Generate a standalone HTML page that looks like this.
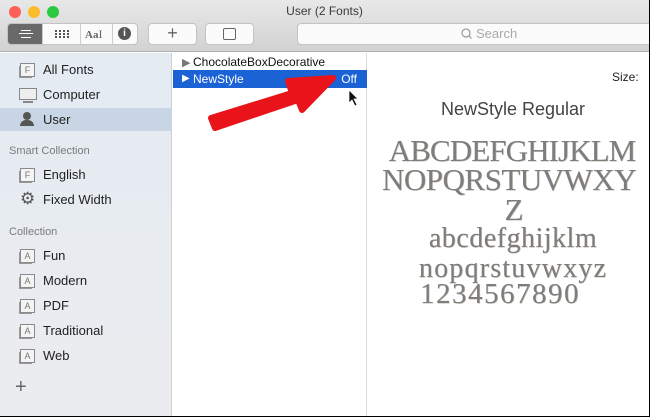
<!DOCTYPE html>
<html><head><style>
*{margin:0;padding:0;box-sizing:border-box}
body{width:650px;height:417px;overflow:hidden;background:#000;font-family:"Liberation Sans",sans-serif;position:relative}
.win{position:absolute;left:0;top:0;width:649px;height:416px;background:#fff;overflow:hidden}
.top{position:absolute;left:0;top:0;width:100%;height:52px;background:linear-gradient(#e9e8e9,#d3d2d3);border-bottom:1px solid #b1b0b1}
.dot{position:absolute;top:6px;width:12px;height:12px;border-radius:50%}
.title{position:absolute;top:4px;left:0;width:100%;text-align:center;font-size:12px;color:#3a3a3a}
.btn{position:absolute;top:23px;height:22px;background:#fbfbfb;border:1px solid #c4c3c4;border-radius:4px}
.side{position:absolute;left:0;top:53px;width:172px;height:363px;background:linear-gradient(#e4ebf3,#ebecef);border-right:1px solid #d0d0d0}
.it{position:absolute;left:43px;font-size:13px;color:#1f1f1f}
.hd{position:absolute;left:9px;font-size:11px;color:#7a7a7a}
.ic{position:absolute;left:20px;width:15px;height:14px;border:1px solid #8a8a8a;background:#f4f4f4;font-size:9px;color:#777;text-align:center;line-height:12px;box-shadow:-2px 2px 0 -1px #999}
.list{position:absolute;left:173px;top:53px;width:194px;height:363px;background:#fff;border-right:1px solid #dcdcdc}
.pv{position:absolute;font-family:"Liberation Serif",serif;color:#7d7d80;font-size:31px;white-space:nowrap;text-align:center;left:368px;width:290px;text-shadow:0.6px 0.6px 0 #c4b8a4}
</style></head><body><div class="win">
<div class="top">
<div class="dot" style="left:9px;background:#fc5f57"></div>
<div class="dot" style="left:28px;background:#fdbc2e"></div>
<div class="dot" style="left:47px;background:#29c940"></div>
<div class="title">User (2 Fonts)</div>
<div class="btn" style="left:7px;width:131px;overflow:hidden">
 <div style="position:absolute;left:0;top:0;width:34px;height:20px;background:#6a696a"></div>
 <div style="position:absolute;left:13px;top:6px;width:10px;height:8px;border-top:1px solid #fff;border-bottom:1px solid #fff"></div>
 <div style="position:absolute;left:11px;top:9px;width:14px;border-top:1px solid #fff"></div>
 <svg style="position:absolute;left:47px;top:6px" width="14" height="8"><g fill="#555"><rect x="0" y="0" width="2" height="2"/><rect x="4" y="0" width="2" height="2"/><rect x="8" y="0" width="2" height="2"/><rect x="12" y="0" width="2" height="2"/><rect x="0" y="3" width="2" height="2"/><rect x="4" y="3" width="2" height="2"/><rect x="8" y="3" width="2" height="2"/><rect x="12" y="3" width="2" height="2"/><rect x="0" y="6" width="2" height="2"/><rect x="4" y="6" width="2" height="2"/><rect x="8" y="6" width="2" height="2"/><rect x="12" y="6" width="2" height="2"/></g></svg>
 <div style="position:absolute;left:77px;top:3px;font-size:11px;color:#666;font-family:'Liberation Serif',serif;font-weight:bold">Aa<span style="font-weight:normal;font-size:12px">I</span></div>
 <div style="position:absolute;left:110px;top:3px;width:13px;height:13px;border-radius:50%;background:#555;color:#fff;font-size:10px;text-align:center;line-height:13px;font-weight:bold">i</div>
 <div style="position:absolute;left:34px;top:0;height:20px;border-left:1px solid #ccc"></div>
 <div style="position:absolute;left:72px;top:0;height:20px;border-left:1px solid #ccc"></div>
 <div style="position:absolute;left:104px;top:0;height:20px;border-left:1px solid #ccc"></div>
</div>
<div class="btn" style="left:148px;width:49px;text-align:center;font-size:18px;line-height:18px;color:#666;font-weight:300">+</div>
<div class="btn" style="left:205px;width:49px"><div style="position:absolute;left:17px;top:4px;width:13px;height:12px;border:1.5px solid #666;border-radius:2px"></div></div>
<div class="btn" style="left:297px;width:360px;font-size:13px;color:#a9a9a9;padding-left:163px;line-height:20px">
<svg width="11" height="11" style="vertical-align:-1px;margin-right:4px"><circle cx="5" cy="5" r="4" fill="none" stroke="#999" stroke-width="1.2"/><path d="M8,8 L10.5,10.5" stroke="#999" stroke-width="1.2"/></svg>Search</div>
</div>
<div class="side">
<div class="ic" style="top:10px">F</div><div class="it" style="top:9px">All Fonts</div>
<div style="position:absolute;left:19px;top:35px;width:18px;height:12px;border:1px solid #888;background:#eee"></div><div style="position:absolute;left:23px;top:48px;width:10px;border-top:2px solid #888"></div><div class="it" style="top:34px">Computer</div>
<div style="position:absolute;left:0;top:55px;width:172px;height:23px;background:#c8d5e4"></div>
<div style="position:absolute;left:23px;top:59px;width:8px;height:8px;border-radius:50%;background:#555"></div><div style="position:absolute;left:20px;top:67px;width:14px;height:6px;border-radius:6px 6px 0 0;background:#555"></div>
<div class="it" style="top:59px">User</div>
<div class="hd" style="top:92px">Smart Collection</div>
<div class="ic" style="top:115px">F</div><div class="it" style="top:114px">English</div>
<div style="position:absolute;left:20px;top:137px;font-size:17px;color:#555;line-height:17px">⚙</div><div class="it" style="top:139px">Fixed Width</div>
<div class="hd" style="top:173px">Collection</div>
<div class="ic" style="top:196px">A</div><div class="it" style="top:195px">Fun</div>
<div class="ic" style="top:221px">A</div><div class="it" style="top:220px">Modern</div>
<div class="ic" style="top:246px">A</div><div class="it" style="top:245px">PDF</div>
<div class="ic" style="top:271px">A</div><div class="it" style="top:270px">Traditional</div>
<div class="ic" style="top:296px">A</div><div class="it" style="top:295px">Web</div>
<div style="position:absolute;left:15px;font-size:20px;color:#666;font-weight:300;top:323px">+</div>
</div>
<div class="list">
<div style="position:absolute;left:9px;top:3px;font-size:11px;color:#777">▶</div>
<div style="position:absolute;left:20px;top:2px;font-size:12px;color:#111">ChocolateBoxDecorative</div>
<div style="position:absolute;left:0;top:17px;width:194px;height:18px;background:#1b62d5;color:#fff;font-size:12px;line-height:18px">
<span style="position:absolute;left:9px;font-size:10px">▶</span><span style="position:absolute;left:20px">NewStyle</span><span style="position:absolute;right:10px">Off</span></div>
</div>
<div style="position:absolute;left:612px;top:70px;font-size:12px;color:#222">Size:</div>
<div style="position:absolute;left:368px;width:290px;text-align:center;top:99px;font-size:18px;color:#444">NewStyle Regular</div>
<div class="pv" style="top:133px;letter-spacing:-0.9px;left:367px">ABCDEFGHIJKLM</div>
<div class="pv" style="top:162px;letter-spacing:-0.5px;left:382px;text-align:left">NOPQRSTUVWXY</div>
<div class="pv" style="top:192px;left:369px">Z</div>
<div class="pv" style="top:223px;font-size:28px;letter-spacing:0.5px;left:368px">abcdefghijklm</div>
<div class="pv" style="top:253px;font-size:28px;letter-spacing:1.2px;left:368px">nopqrstuvwxyz</div>
<div class="pv" style="top:278px;font-size:29px;letter-spacing:1.5px;left:355px">1234567890</div>
<svg style="position:absolute;left:0;top:0" width="650" height="417">
<path d="M211,118 L292,93 L288,81 L333,78 L302,110 L298,100 L215,128 Z" fill="#e8141a" stroke="#e8141a" stroke-width="6" stroke-linejoin="round"/>
<path d="M349,90 L349,103 L352,100 L355,106 L357,105 L354,99 L358,99 Z" fill="#111" stroke="#fff" stroke-width="0.7"/>
</svg>
</div></body></html>
